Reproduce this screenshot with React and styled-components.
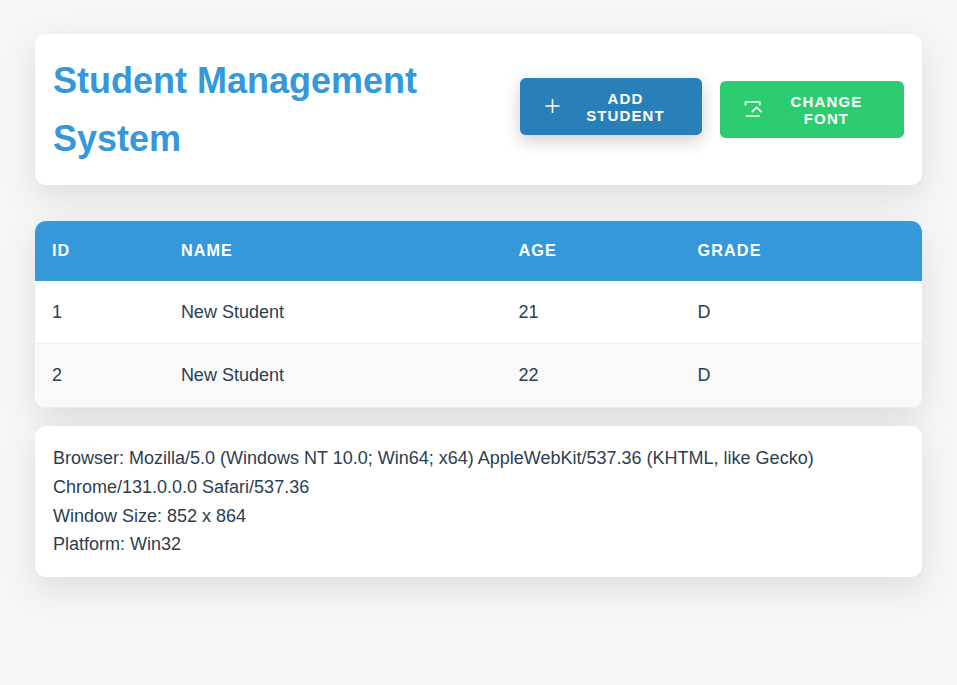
import React from "react";
import styled, { createGlobalStyle } from "styled-components";

const GlobalStyle = createGlobalStyle`
  *, *::before, *::after { box-sizing: border-box; }
  body {
    margin: 0;
    min-height: 100vh;
    background: #f5f7f6;
    color: #2c3e50;
    font: 18px/1.6 "Liberation Sans", Arial, sans-serif;
  }
`;

const Page = styled.main`
  width: 887px;
  margin: 0 auto;
  padding-top: 34px;
`;

const Card = styled.section`
  padding: 18px;
  border-radius: 11.25px;
  background: #fff;
  box-shadow: 0 11.25px 33.75px rgba(0, 0, 0, 0.1);
`;

const Header = styled(Card)`
  display: flex;
  align-items: center;
  justify-content: space-between;
  height: 151px;
  margin-bottom: 36px;
`;

const Title = styled.h1`
  width: 400px;
  margin: 0;
  color: #3498db;
  font-size: 36px;
  font-weight: 700;
  line-height: 58px;
`;

const Actions = styled.div`
  display: flex;
  gap: 18px;
`;

const Button = styled.button`
  display: flex;
  align-items: center;
  gap: 9px;
  width: ${(p) => (p.$raised ? 182 : 184)}px;
  height: 57px;
  padding: 1px 22.5px 0;
  border: 0;
  border-radius: 5.625px;
  background: ${(p) => (p.$raised ? "#2980b9" : "#2ecc71")};
  box-shadow: ${(p) => (p.$raised ? "0 5.6px 16.9px rgba(0, 0, 0, 0.2)" : "none")};
  transform: ${(p) => (p.$raised ? "translateY(-3px)" : "none")};
  color: #fff;
  font: 700 15px/17px "Liberation Sans", Arial, sans-serif;
  letter-spacing: 1.125px;
  text-transform: uppercase;
  cursor: pointer;
`;

const Label = styled.span`
  flex: 1;
  text-align: center;
`;

const Icon = styled.svg`
  flex: none;
  width: 20px;
  height: 20px;
  fill: none;
  stroke: #fff;
  stroke-width: 1.6;
`;

const Table = styled.table`
  width: 100%;
  margin-bottom: 18px;
  table-layout: fixed;
  border-collapse: separate;
  border-spacing: 0;
  border-radius: 11.25px;
  overflow: hidden;
  background: #fff;
  box-shadow: 0 11.25px 33.75px rgba(0, 0, 0, 0.1);
`;

const HeadCell = styled.th`
  width: ${(p) => p.$width};
  height: 60px;
  padding: 0 16.875px;
  background: #3498db;
  color: #fff;
  font-size: 16.2px;
  font-weight: 700;
  letter-spacing: 1.125px;
  text-align: left;
  text-transform: uppercase;
`;

const Row = styled.tr`
  height: 63px;
  &:nth-child(even) { height: 64px; background: #f9f9f9; }
`;

const Cell = styled.td`
  padding: 0 16.875px;
  border-bottom: 1px solid #ecf0f1;
`;

const Info = styled.p`
  margin: 0;
`;

const columns = [
  ["ID", "129px"],
  ["Name", "337.6px"],
  ["Age", "179px"],
  ["Grade", "auto"],
];

const students = [
  [1, "New Student", 21, "D"],
  [2, "New Student", 22, "D"],
];

export default function App() {
  return (
    <>
      <GlobalStyle />
      <Page>
        <Header as="header">
          <Title>Student Management System</Title>
          <Actions>
            <Button $raised>
              <Icon viewBox="0 0 20 20"><path d="M9.5 2v14M2.5 9h14" /></Icon>
              <Label>Add Student</Label>
            </Button>
            <Button>
              <Icon viewBox="0 0 20 20">
                <path d="M2.5 5.5V2H16.8V5.5M8.8 12.1l4.9-4.7 4.9 4.7M2.8 16h14" />
              </Icon>
              <Label>Change Font</Label>
            </Button>
          </Actions>
        </Header>
        <Table>
          <thead>
            <tr>
              {columns.map(([name, width]) => (
                <HeadCell key={name} $width={width}>{name}</HeadCell>
              ))}
            </tr>
          </thead>
          <tbody>
            {students.map((student) => (
              <Row key={student[0]}>
                {student.map((value, i) => <Cell key={i}>{value}</Cell>)}
              </Row>
            ))}
          </tbody>
        </Table>
        <Card>
          <Info>
            Browser: Mozilla/5.0 (Windows NT 10.0; Win64; x64) AppleWebKit/537.36 (KHTML, like Gecko) Chrome/131.0.0.0 Safari/537.36
          </Info>
          <Info>Window Size: 852 x 864</Info>
          <Info>Platform: Win32</Info>
        </Card>
      </Page>
    </>
  );
}
